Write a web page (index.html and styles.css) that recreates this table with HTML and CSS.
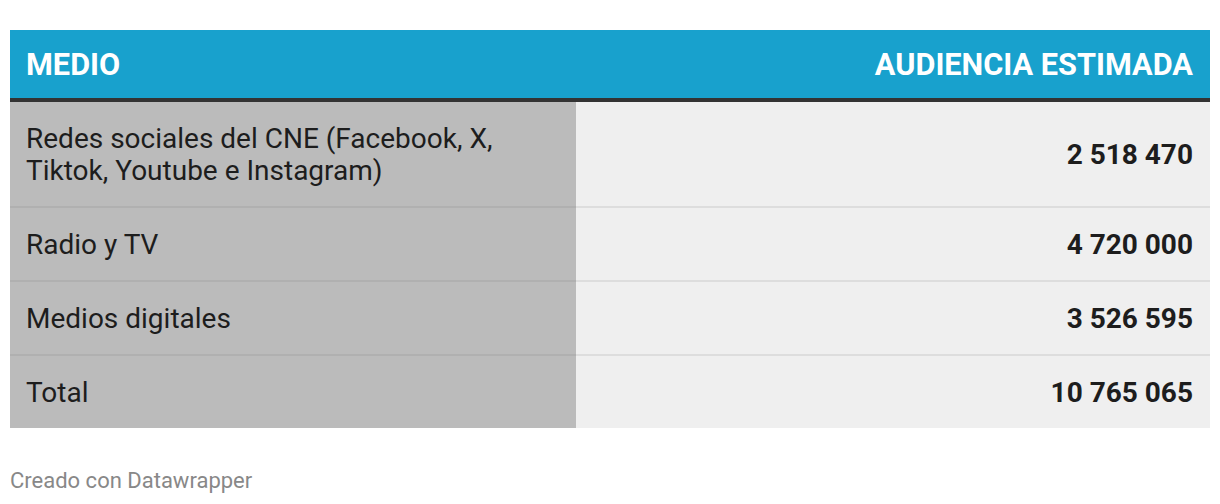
FILE: index.html
```html
<!DOCTYPE html>
<html lang="es">
<head>
<meta charset="utf-8">
<title>Audiencia estimada</title>
<link rel="stylesheet" href="styles.css">
</head>
<body>
<div class="chart">
  <table class="tbl">
    <thead>
      <tr>
        <th class="c-name">MEDIO</th>
        <th class="c-num">AUDIENCIA ESTIMADA</th>
      </tr>
    </thead>
    <tbody>
      <tr class="tall">
        <td class="c-name">Redes sociales del CNE (Facebook, X,<br>Tiktok, Youtube e Instagram)</td>
        <td class="c-num">2 518 470</td>
      </tr>
      <tr>
        <td class="c-name">Radio y TV</td>
        <td class="c-num">4 720 000</td>
      </tr>
      <tr>
        <td class="c-name">Medios digitales</td>
        <td class="c-num">3 526 595</td>
      </tr>
      <tr class="last">
        <td class="c-name">Total</td>
        <td class="c-num">10 765 065</td>
      </tr>
    </tbody>
  </table>
  <div class="footer">Creado con Datawrapper</div>
</div>
</body>
</html>
```

FILE: styles.css
```css
html, body {
  margin: 0;
  padding: 0;
  background: #ffffff;
}
body {
  font-family: Roboto, "Liberation Sans", sans-serif;
  color: #1d1d1d;
}
.chart {
  padding: 30px 10px 0 10px;
}
.tbl {
  width: 1200px;
  border-collapse: collapse;
  table-layout: fixed;
}
.tbl th {
  background: #18a1cd;
  color: #ffffff;
  font-weight: 700;
  font-size: 30.7px;
  height: 70px;
  padding: 0 17px 0 16px;
  border-bottom: 4px solid #333333;
  box-sizing: border-box;
  vertical-align: middle;
  text-align: left;
}
.tbl th.c-name {
  width: 566px;
}
.tbl th.c-num {
  text-align: right;
}
.tbl td {
  font-size: 28px;
  line-height: 32px;
  height: 70px;
  padding: 2px 17px 0 16px;
  vertical-align: middle;
  border-bottom: 2px solid #dddddd;
}
.tbl td.c-name {
  background: #bbbbbb;
  border-bottom-color: #b0b0b0;
}
.tbl td.c-num {
  background: #efefef;
  text-align: right;
  font-weight: 700;
}
.tbl tr.tall td {
  height: 102px;
}
.tbl tr.last td {
  border-bottom: none;
}
.footer {
  margin-top: 40px;
  font-size: 22px;
  color: #888888;
}
```
